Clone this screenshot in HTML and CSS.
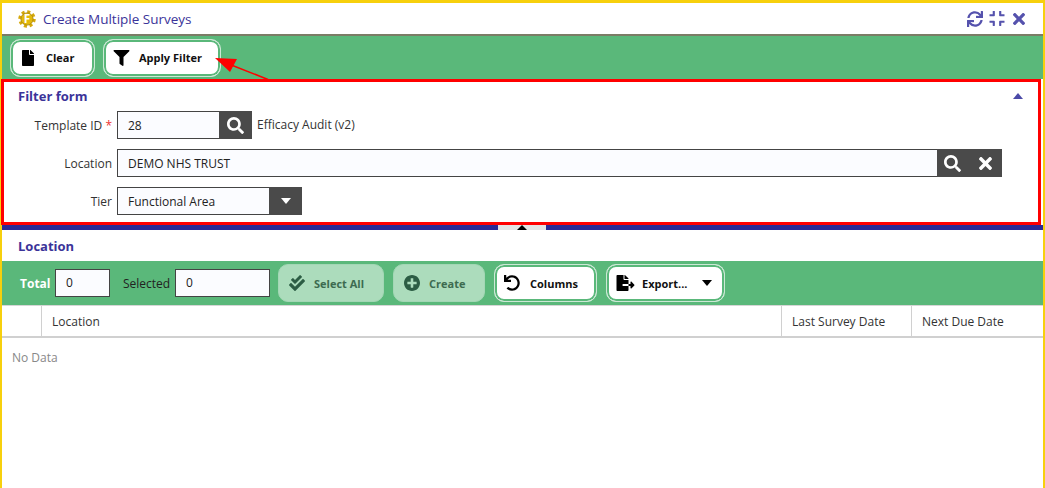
FILE: index.html
```html
<!DOCTYPE html>
<html lang="en">
<head>
<meta charset="utf-8">
<title>Create Multiple Surveys</title>
<link rel="stylesheet" href="styles.css">
</head>
<body>
<div class="window">
  <header class="titlebar">
    <svg class="logo" viewBox="0 0 20 20" aria-hidden="true">
      <circle cx="10" cy="10" r="7.7" fill="none" stroke="#d6a80a" stroke-width="4" stroke-dasharray="3.2 2.85"/>
      <circle cx="10" cy="10" r="6.8" fill="#e3b90c" stroke="#a8860f" stroke-width="1"/>
      <text x="10" y="14.4" class="logo-f">F</text>
    </svg>
    <h1 class="title">Create Multiple Surveys</h1>
    <div class="win-icons">
      <svg class="wi wi-sync" viewBox="0 0 512 512"><path d="M440.65 12.57l4 82.77A247.16 247.16 0 0 0 255.83 8C134.73 8 33.91 94.92 12.29 209.82A12 12 0 0 0 24.09 224h49.05a12 12 0 0 0 11.67-9.26 175.91 175.91 0 0 1 317-56.94l-101.46-4.86a12 12 0 0 0-12.57 12v47.41a12 12 0 0 0 12 12H500a12 12 0 0 0 12-12V12a12 12 0 0 0-12-12h-47.37a12 12 0 0 0-11.98 12.57zM255.83 432a175.61 175.61 0 0 1-146-77.8l101.8 4.87a12 12 0 0 0 12.57-12v-47.4a12 12 0 0 0-12-12H12a12 12 0 0 0-12 12V500a12 12 0 0 0 12 12h47.35a12 12 0 0 0 12-12.6l-4.15-82.57A247.17 247.17 0 0 0 255.83 504c121.11 0 221.93-86.92 243.55-201.82a12 12 0 0 0-11.8-14.18h-49.05a12 12 0 0 0-11.67 9.26A175.86 175.86 0 0 1 255.83 432z"/></svg>
      <svg class="wi wi-compress" viewBox="0 32 448 448"><path d="M436 192H312c-13.3 0-24-10.7-24-24V44c0-6.6 5.4-12 12-12h40c6.6 0 12 5.4 12 12v84h84c6.6 0 12 5.4 12 12v40c0 6.6-5.4 12-12 12zm-276-24V44c0-6.6-5.4-12-12-12h-40c-6.6 0-12 5.4-12 12v84H12c-6.6 0-12 5.4-12 12v40c0 6.6 5.4 12 12 12h124c13.3 0 24-10.7 24-24zm0 300V344c0-13.3-10.7-24-24-24H12c-6.6 0-12 5.4-12 12v40c0 6.6 5.4 12 12 12h84v84c0 6.6 5.4 12 12 12h40c6.6 0 12-5.4 12-12zm192 0v-84h84c6.6 0 12-5.4 12-12v-40c0-6.6-5.4-12-12-12H312c-13.3 0-24 10.7-24 24v124c0 6.6 5.4 12 12 12h40c6.6 0 12-5.4 12-12z"/></svg>
      <svg class="wi wi-times" viewBox="0 80 352 352"><path d="M242.72 256l100.07-100.07c12.28-12.28 12.28-32.19 0-44.48l-22.24-22.24c-12.28-12.28-32.19-12.28-44.48 0L176 189.28 75.93 89.21c-12.28-12.28-32.19-12.28-44.48 0L9.21 111.45c-12.28 12.28-12.28 32.19 0 44.48L109.28 256 9.21 356.07c-12.28 12.28-12.28 32.19 0 44.48l22.24 22.24c12.28 12.28 32.2 12.28 44.48 0L176 322.72l100.07 100.07c12.28 12.28 32.2 12.28 44.48 0l22.24-22.24c12.28-12.28 12.28-32.19 0-44.48L242.72 256z"/></svg>
    </div>
  </header>

  <div class="toolbar toolbar-top">
    <button class="btn btn-clear" type="button">
      <svg class="ico ico-file" viewBox="0 0 384 512"><path d="M224 136V0H24C10.7 0 0 10.7 0 24v464c0 13.3 10.7 24 24 24h336c13.3 0 24-10.7 24-24V160H248c-13.2 0-24-10.8-24-24zm160-14.1v6.1H256V0h6.1c6.4 0 12.5 2.5 17 7l97.9 98c4.5 4.5 7 10.6 7 16.9z"/></svg>
      <span>Clear</span>
    </button>
    <button class="btn btn-apply" type="button">
      <svg class="ico ico-filter" viewBox="0 0 512 512"><path d="M487.976 0H24.028C2.71 0-8.047 25.866 7.058 40.971L192 225.941V432c0 7.831 3.821 15.17 10.237 19.662l80 55.98C298.02 518.69 320 507.493 320 487.98V225.941l184.947-184.97C520.021 25.896 509.338 0 487.976 0z"/></svg>
      <span>Apply Filter</span>
    </button>
  </div>

  <section class="filter">
    <div class="filter-head">
      <h2 class="section-title">Filter form</h2>
      <span class="caret-up"></span>
    </div>
    <div class="form-row row-template">
      <label class="lbl">Template ID <b class="req">*</b></label>
      <div class="field f-template">
        <span class="val">28</span>
        <span class="addon addon-1">
          <svg class="ico-s" viewBox="0 0 512 512"><path d="M505 442.7L405.3 343c-4.5-4.5-10.6-7-17-7H372c27.6-35.3 44-79.7 44-128C416 93.1 322.9 0 208 0S0 93.1 0 208s93.1 208 208 208c48.3 0 92.7-16.4 128-44v16.3c0 6.4 2.5 12.5 7 17l99.7 99.7c9.4 9.4 24.6 9.4 33.9 0l28.3-28.3c9.4-9.4 9.4-24.6.1-34zM208 336c-70.7 0-128-57.2-128-128 0-70.7 57.2-128 128-128 70.7 0 128 57.2 128 128 0 70.7-57.2 128-128 128z"/></svg>
        </span>
      </div>
      <span class="hint">Efficacy Audit (v2)</span>
    </div>
    <div class="form-row row-location">
      <label class="lbl">Location</label>
      <div class="field f-location">
        <span class="val">DEMO NHS TRUST</span>
        <span class="addon addon-2">
          <svg class="ico-s" viewBox="0 0 512 512"><path d="M505 442.7L405.3 343c-4.5-4.5-10.6-7-17-7H372c27.6-35.3 44-79.7 44-128C416 93.1 322.9 0 208 0S0 93.1 0 208s93.1 208 208 208c48.3 0 92.7-16.4 128-44v16.3c0 6.4 2.5 12.5 7 17l99.7 99.7c9.4 9.4 24.6 9.4 33.9 0l28.3-28.3c9.4-9.4 9.4-24.6.1-34zM208 336c-70.7 0-128-57.2-128-128 0-70.7 57.2-128 128-128 70.7 0 128 57.2 128 128 0 70.7-57.2 128-128 128z"/></svg>
          <svg class="ico-x" viewBox="0 80 352 352"><path d="M242.72 256l100.07-100.07c12.28-12.28 12.28-32.19 0-44.48l-22.24-22.24c-12.28-12.28-32.19-12.28-44.48 0L176 189.28 75.93 89.21c-12.28-12.28-32.19-12.28-44.48 0L9.21 111.45c-12.28 12.28-12.28 32.19 0 44.48L109.28 256 9.21 356.07c-12.28 12.28-12.28 32.19 0 44.48l22.24 22.24c12.28 12.28 32.2 12.28 44.48 0L176 322.72l100.07 100.07c12.28 12.28 32.2 12.28 44.48 0l22.24-22.24c12.28-12.28 12.28-32.19 0-44.48L242.72 256z"/></svg>
        </span>
      </div>
    </div>
    <div class="form-row row-tier">
      <label class="lbl">Tier</label>
      <div class="field f-tier">
        <span class="val">Functional Area</span>
        <span class="addon addon-1"><span class="caret-down"></span></span>
      </div>
    </div>
  </section>

  <div class="splitter"><span class="handle"><span class="handle-tri"></span></span></div>

  <section class="results">
    <h2 class="section-title results-title">Location</h2>
    <div class="toolbar toolbar-grid">
      <span class="total-lbl">Total</span>
      <span class="count c-total">0</span>
      <span class="sel-lbl">Selected</span>
      <span class="count c-sel">0</span>
      <button class="btn btn-off btn-all" type="button">
        <svg class="ico ico-check" viewBox="0 0 512 512"><path d="M505 174.8l-39.6-39.6c-9.4-9.4-24.6-9.4-33.9 0L192 374.7 80.6 263.2c-9.4-9.4-24.6-9.4-33.9 0L7 302.9c-9.3 9.4-9.3 24.6 0 34L175 505c9.4 9.4 24.6 9.4 33.9 0l296-296.2c9.4-9.5 9.4-24.7.1-34zm-324.3 106c6.2 6.3 16.4 6.3 22.6 0l208-208c6.2-6.2 6.2-16.4 0-22.6L366.1 4.7c-6.2-6.2-16.4-6.2-22.6 0L192 156.2l-55.4-55.5c-6.2-6.2-16.4-6.2-22.6 0L68.7 146c-6.2 6.2-6.2 16.4 0 22.6l112 112.1z"/></svg>
        <span>Select All</span>
      </button>
      <button class="btn btn-off btn-create" type="button">
        <svg class="ico ico-plus" viewBox="8 8 496 496"><path d="M256 8C119 8 8 119 8 256s111 248 248 248 248-111 248-248S393 8 256 8zm144 276c0 6.6-5.4 12-12 12h-92v92c0 6.6-5.4 12-12 12h-56c-6.6 0-12-5.4-12-12v-92h-92c-6.6 0-12-5.4-12-12v-56c0-6.6 5.4-12 12-12h92v-92c0-6.6 5.4-12 12-12h56c6.6 0 12 5.4 12 12v92h92c6.6 0 12 5.4 12 12v56z"/></svg>
        <span>Create</span>
      </button>
      <button class="btn btn-columns" type="button">
        <svg class="ico ico-undo" viewBox="0 0 512 512"><path d="M212.333 224.333H12c-6.627 0-12-5.373-12-12V12C0 5.373 5.373 0 12 0h48c6.627 0 12 5.373 12 12v78.112C117.773 39.279 184.26 7.47 258.175 8.007c136.906.994 246.448 111.623 246.157 248.532C504.041 393.258 393.12 504 256.333 504c-64.089 0-122.496-24.313-166.51-64.215-5.099-4.622-5.334-12.554-.467-17.42l33.967-33.967c4.474-4.474 11.662-4.717 16.401-.525C170.76 415.336 211.58 432 256.333 432c97.268 0 176-78.716 176-176 0-97.267-78.716-176-176-176-58.496 0-110.28 28.476-142.274 72.333h98.274c6.627 0 12 5.373 12 12v48c0 6.627-5.373 12-12 12z"/></svg>
        <span>Columns</span>
      </button>
      <button class="btn btn-export" type="button">
        <svg class="ico ico-export" viewBox="0 0 576 512"><path d="M384 121.9c0-6.3-2.5-12.4-7-16.9L279.1 7c-4.5-4.5-10.6-7-17-7H256v128h128zM571 308l-95.7-96.4c-10.1-10.1-27.4-3-27.4 11.3V288h-64v64h64v65.2c0 14.3 17.3 21.4 27.4 11.3L571 332c6.6-6.6 6.6-17.4 0-24zm-379 28v-32c0-8.8 7.2-16 16-16h176V160H248c-13.2 0-24-10.8-24-24V0H24C10.7 0 0 10.7 0 24v464c0 13.3 10.7 24 24 24h336c13.3 0 24-10.7 24-24V352H208c-8.8 0-16-7.2-16-16z"/></svg>
        <span>Export...</span>
        <span class="btn-caret"></span>
      </button>
    </div>
    <div class="grid-head">
      <div class="gh gh-check"></div>
      <div class="gh gh-loc">Location</div>
      <div class="gh gh-last">Last Survey Date</div>
      <div class="gh gh-next">Next Due Date</div>
    </div>
    <p class="nodata">No Data</p>
  </section>
</div>

<svg class="annotation" viewBox="0 0 1045 488" aria-hidden="true">
  <rect x="2.5" y="80.5" width="1037" height="143" fill="none" stroke="#ff0000" stroke-width="3"/>
  <line x1="268" y1="79.5" x2="230" y2="64.5" stroke="#ff0000" stroke-width="1.6"/>
  <polygon points="215,58 237,59 230,72" fill="#ff0000"/>
</svg>
</body>
</html>
```
FILE: styles.css
```css
* { box-sizing: border-box; }
html, body { margin: 0; padding: 0; height: 100%; overflow: hidden; background: #fff; }
body { font-family: "Open Sans", sans-serif; font-size: 12px; color: #333; position: relative; }

.window {
  width: 1045px; height: 488px;
  border: solid #f7d00d; border-width: 3px 2px 0;
  display: flex; flex-direction: column;
  background: #fff;
}

.titlebar {
  height: 33px; flex: none;
  border-bottom: 2px solid #7b7c66;
  display: flex; align-items: center;
  padding: 0 18px 0 16px;
}
.logo { width: 18px; height: 18px; flex: none; }
.logo-f { font: 700 13px "Open Sans", sans-serif; fill: #fff; text-anchor: middle; }
.title { margin: 0 0 0 7px; font-size: 13.5px; font-weight: 400; color: #3b3399; }
.win-icons { margin-left: auto; display: flex; align-items: center; gap: 6px; }
.wi { display: block; fill: #5552ad; }
.wi-sync { width: 16px; height: 16px; }
.wi-compress { width: 16px; height: 15px; }
.wi-times { width: 12px; height: 12px; margin-left: 2px; }

.toolbar { background: #5ab87a; display: flex; align-items: center; flex: none; }
.toolbar-top { height: 43px; padding-left: 8px; gap: 8px; }
.toolbar-grid { height: 44px; padding-left: 18px; }

.btn {
  height: 38px; padding: 0; margin: 0;
  display: flex; align-items: center;
  font: 700 11px "Open Sans", sans-serif; color: #111;
  background: #fff;
  border: 1px solid #cde8d6; border-radius: 10px;
  box-shadow: inset 0 0 0 2px #5ab87a;
}
.ico { display: block; flex: none; fill: #000; }
.btn-clear { width: 85px; padding-left: 11px; }
.ico-file { width: 12px; height: 16px; margin-right: 12px; }
.btn-apply { width: 118px; padding-left: 9px; }
.ico-filter { width: 17px; height: 16px; margin-right: 9px; }

.filter { height: 146px; flex: none; padding: 2px 0 0 16px; }
.filter-head { height: 30px; display: flex; align-items: center; }
.section-title { margin: 0; font-size: 13px; font-weight: 700; color: #3b3399; }
.caret-up {
  margin-left: auto; margin-right: 20px;
  border: solid transparent; border-width: 0 5.5px 6px; border-bottom-color: #4b4aa8;
}

.form-row { display: flex; align-items: center; height: 28px; margin-bottom: 10px; }
.lbl { width: 94px; margin-right: 5px; text-align: right; color: #333; margin-left: 0; flex: none; }
.req { color: #e33; font-weight: 400; }
.field {
  height: 28px; display: flex; align-items: stretch;
  background: #fbfcff; border: 1px solid #444;
  font-size: 12px; color: #222;
}
.val { flex: 1; padding-left: 10px; line-height: 27px; }
.addon { background: #4a4a4a; display: flex; align-items: center; margin: -1px -1px -1px 0; flex: none; }
.addon-1 { width: 33px; justify-content: center; }
.addon-2 { width: 65px; padding-left: 7px; gap: 18px; }
.ico-s { width: 17px; height: 17px; fill: #fff; display: block; }
.ico-x { width: 13px; height: 13px; fill: #fff; display: block; }
.f-template { width: 135px; }
.f-location { width: 885px; }
.f-tier { width: 185px; }
.hint { margin-left: 5px; position: relative; top: -1px; }
.caret-down { border: solid transparent; border-width: 6px 5.5px 0; border-top-color: #fff; }

.splitter { height: 5px; flex: none; background: #2b2a96; display: flex; justify-content: center; }
.handle { width: 48px; height: 5px; background: #e4e4e4; display: flex; justify-content: center; position: relative; left: -1px; }
.handle-tri { border: solid transparent; border-width: 0 5px 5px; border-bottom-color: #000; }

.results { flex: 1; display: flex; flex-direction: column; }
.results-title { height: 31px; flex: none; padding-left: 16px; line-height: 33px; }

.total-lbl { font-weight: 700; color: #fff; width: 35px; }
.count {
  height: 28px; background: #fbfcff; border: 1px solid #444; color: #222;
  padding-left: 10px; line-height: 26px;
}
.c-total { width: 55px; }
.sel-lbl { margin-left: 13px; width: 52px; color: #222; }
.c-sel { width: 95px; margin-right: 8px; }
.btn-off {
  background: #acdcbc; border: 1px solid #a3d7b5; box-shadow: none; color: #3d6b50;
}
.btn-off .ico { fill: #2c5d44; }
.btn-all { width: 106px; padding-left: 10px; margin-right: 9px; }
.ico-check { width: 16px; height: 16px; margin-right: 9px; }
.btn-create { width: 92px; padding-left: 10px; margin-right: 9px; }
.ico-plus { width: 16px; height: 16px; margin-right: 9px; }
.btn-columns { width: 103px; padding-left: 9px; margin-right: 9px; }
.ico-undo { width: 16px; height: 16px; margin-right: 10px; }
.btn-export { width: 119px; padding-left: 9px; }
.ico-export { width: 19px; height: 16px; margin-right: 7px; }
.btn-caret { margin-left: 15px; border: solid transparent; border-width: 6px 5.5px 0; border-top-color: #000; }

.grid-head {
  height: 33px; flex: none; display: flex;
  border-top: 1px solid #d6d6d6; border-bottom: 2px solid #d0d0d0;
  color: #333;
}
.gh { display: flex; align-items: center; padding-left: 10px; border-right: 1px solid #d0d0d0; }
.gh-check { width: 40px; padding: 0; }
.gh-loc { width: 740px; }
.gh-last { width: 130px; }
.gh-next { flex: 1; border-right: 0; }
.nodata { margin: 11px 0 0 10px; color: #888; line-height: 17px; }

.annotation { position: absolute; left: 0; top: 0; width: 1045px; height: 488px; pointer-events: none; }
```
